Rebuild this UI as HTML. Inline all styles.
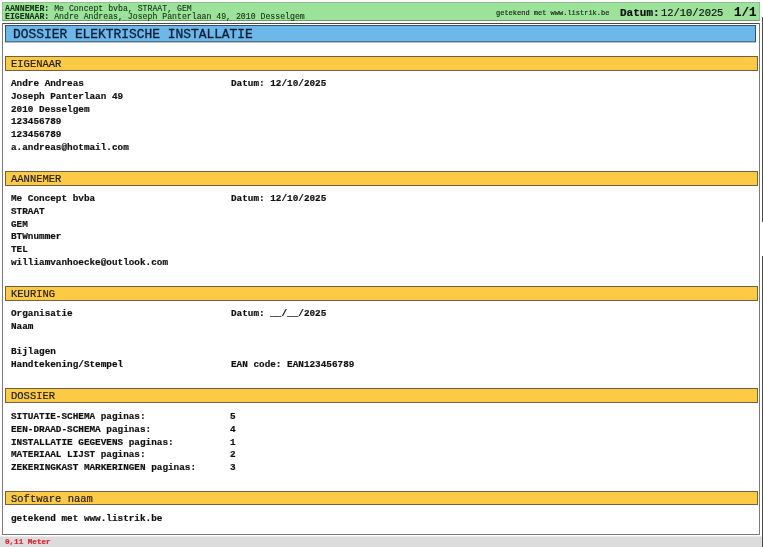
<!DOCTYPE html>
<html><head><meta charset="utf-8">
<style>
*{margin:0;padding:0;box-sizing:border-box}
html{will-change:transform}div{-webkit-text-stroke:0.2px currentColor}html,body{width:763px;height:547px;overflow:hidden;background:#fff;font-family:"Liberation Mono",monospace;color:#111}
.abs{position:absolute;white-space:pre}
#hdr{position:absolute;left:2px;top:2px;width:758px;height:19px;background:#9ce29a;border:1px solid #8fbf8f;border-bottom-color:#6f9f6f}
#page{position:absolute;left:2px;top:23px;width:758px;height:512px;border:1px solid #7a7a7a;border-top-color:#4a4a4a;border-radius:1px;background:#fff}
#title{position:absolute;left:5px;top:25px;width:751px;height:17px;background:#6db8ea;border:1px solid #34506a;border-bottom-color:#5a7282;box-shadow:0 1px 0 #b4c0c8}
.bar{position:absolute;left:5px;width:753px;height:15px;background:#fcca44;border:1px solid #735f45}
.bt{position:absolute;font-size:10.5px;line-height:13px;color:#222;white-space:pre;transform:scaleY(1.1);transform-origin:0 0}
.t{position:absolute;font-size:9.35px;font-weight:bold;white-space:pre;line-height:12.75px;color:#111}
#foot{position:absolute;left:0;top:536px;width:763px;height:11px;background:#dcdcdc;border-top:1px solid #ececec}
#scroll{position:absolute;left:762px;top:17px;width:1px;height:205px;background:#4a4a4a}
</style></head><body>
<div id="hdr"></div>
<div class="abs" style="left:5px;top:5px;font-size:8.2px;line-height:7.9px;color:#123312;-webkit-text-stroke:0.1px currentColor"><b>AANNEMER:</b> Me Concept bvba, STRAAT, GEM
<b>EIGENAAR:</b> Andre Andreas, Joseph Panterlaan 49, 2010 Desselgem</div>
<div class="abs" style="left:496px;top:9px;font-size:7px;line-height:8px;color:#1a2e1a">getekend met www.listrik.be</div>
<div class="abs" style="left:620px;top:7px;font-size:11px;line-height:13px;font-weight:bold">Datum:</div><div class="abs" style="left:661px;top:7px;font-size:10.4px;line-height:13px">12/10/2025</div>
<div class="abs" style="left:734px;top:6px;font-size:12.5px;line-height:14px;font-weight:bold">1/1</div>
<div id="page"></div>
<div id="foot"></div>
<div id="scroll"></div><div class="sc2" style="position:absolute;left:762px;top:256px;width:1px;height:291px;background:#4a4a4a"></div>
<div id="title"></div>
<div class="abs" style="left:13px;top:28px;font-size:12.9px;line-height:14px;color:#102038;-webkit-text-stroke:0.35px currentColor">DOSSIER ELEKTRISCHE INSTALLATIE</div>

<div class="bar" style="top:56px"></div>
<div class="bt" style="left:11px;top:57px">EIGENAAR</div>
<div class="t" style="left:11px;top:78px">Andre Andreas
Joseph Panterlaan 49
2010 Desselgem
123456789
123456789
a.andreas@hotmail.com</div>
<div class="t" style="left:231px;top:78px">Datum: 12/10/2025</div>

<div class="bar" style="top:171px"></div>
<div class="bt" style="left:11px;top:172px">AANNEMER</div>
<div class="t" style="left:11px;top:193px">Me Concept bvba
STRAAT
GEM
BTWnummer
TEL
williamvanhoecke@outlook.com</div>
<div class="t" style="left:231px;top:193px">Datum: 12/10/2025</div>

<div class="bar" style="top:286px"></div>
<div class="bt" style="left:11px;top:287px">KEURING</div>
<div class="t" style="left:11px;top:308px">Organisatie
Naam

Bijlagen
Handtekening/Stempel</div>
<div class="t" style="left:231px;top:308px">Datum: __/__/2025



EAN code: EAN123456789</div>

<div class="bar" style="top:388px"></div>
<div class="bt" style="left:11px;top:389px">DOSSIER</div>
<div class="t" style="left:11px;top:411px">SITUATIE-SCHEMA paginas:
EEN-DRAAD-SCHEMA paginas:
INSTALLATIE GEGEVENS paginas:
MATERIAAL LIJST paginas:
ZEKERINGKAST MARKERINGEN paginas:</div>
<div class="t" style="left:230px;top:411px">5
4
1
2
3</div>

<div class="bar" style="top:491px;height:14px"></div>
<div class="bt" style="left:11px;top:492px">Software naam</div>
<div class="t" style="left:11px;top:513px">getekend met www.listrik.be</div>

<div class="abs" style="left:5px;top:538px;font-size:7.6px;line-height:9px;color:#e8202c;font-weight:bold">0,11 Meter</div>
</body></html>
